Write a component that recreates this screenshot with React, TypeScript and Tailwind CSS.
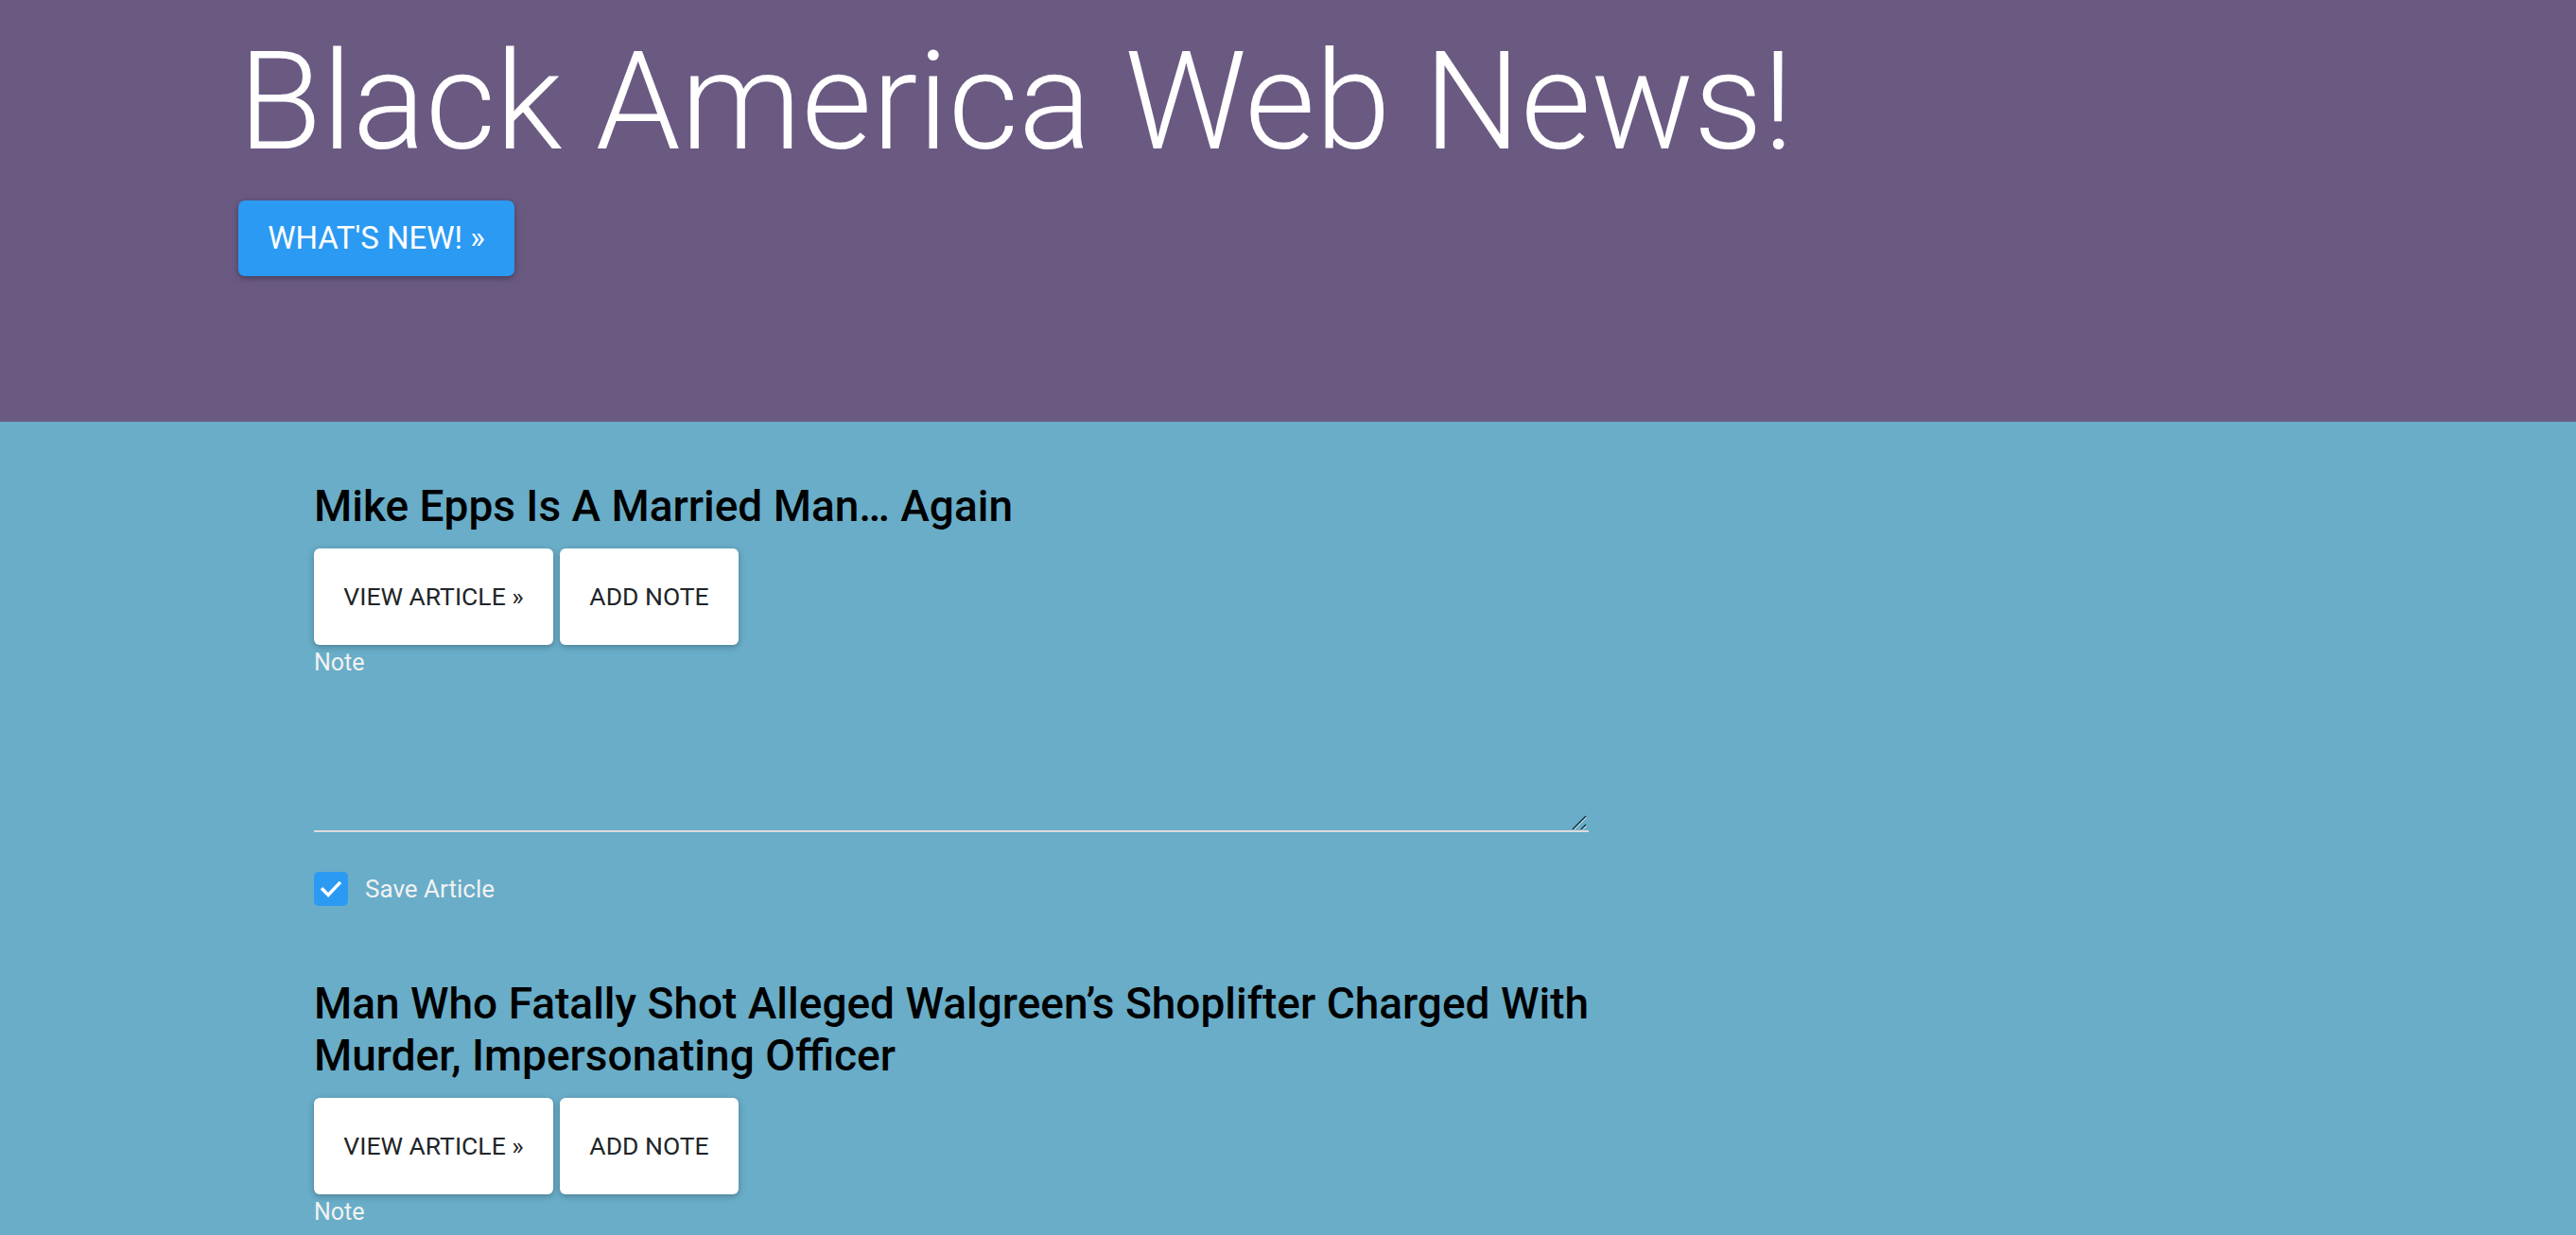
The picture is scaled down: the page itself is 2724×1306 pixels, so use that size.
import { useState } from "react";

const articles = [
  { id: 1, title: "Mike Epps Is A Married Man… Again", saved: true },
  {
    id: 2,
    title:
      "Man Who Fatally Shot Alleged Walgreen’s Shoplifter Charged With Murder, Impersonating Officer",
    saved: true,
  },
];

function Article({ title, saved }: { title: string; saved: boolean }) {
  const [checked, setChecked] = useState(saved);
  const [note, setNote] = useState("");

  return (
    <div className="mb-[76px] w-[1348px]">
      <h3 className="w-[1362px] text-[46px] leading-[55px] font-medium text-black">
        {title}
      </h3>

      <div className="mt-[17px] flex gap-[7px]">
        <button className="h-[102px] w-[253px] rounded-md bg-white text-[26.5px] text-[#212529] uppercase shadow-[0_2px_5px_0_rgba(0,0,0,0.16),0_2px_10px_0_rgba(0,0,0,0.12)]">
          View Article »
        </button>
        <button className="h-[102px] w-[189px] rounded-md bg-white text-[26.5px] text-[#212529] uppercase shadow-[0_2px_5px_0_rgba(0,0,0,0.16),0_2px_10px_0_rgba(0,0,0,0.12)]">
          Add Note
        </button>
      </div>

      <label className="mt-[2px] block text-[25px] leading-[34px] text-[#f2f2f2]">
        Note
      </label>
      <div className="relative">
        <textarea
          value={note}
          onChange={(e) => setNote(e.target.value)}
          className="block h-[162px] w-full resize-none border-0 border-b-2 border-[#dcdcdc] bg-transparent text-[23px] text-white outline-none"
        />
        {/* resize grip */}
        <svg
          viewBox="0 0 16 16"
          className="pointer-events-none absolute right-[2px] bottom-[2px] h-[16px] w-[16px]"
        >
          <path d="M1 15L15 1" stroke="#1d3b4b" strokeWidth="1.6" />
          <path d="M2.5 15.5L15.5 2.5" stroke="#e8f2f6" strokeWidth="1" />
          <path d="M10 15L15 10" stroke="#1d3b4b" strokeWidth="1.6" />
          <path d="M11.5 15.5L15.5 11.5" stroke="#e8f2f6" strokeWidth="1" />
        </svg>
      </div>

      <label className="mt-[42px] flex cursor-pointer items-center gap-[18px]">
        <span
          onClick={() => setChecked(!checked)}
          className={
            checked
              ? "flex h-[36px] w-[36px] items-center justify-center rounded-[5px] bg-[#2b9af3]"
              : "flex h-[36px] w-[36px] items-center justify-center rounded-[5px] border-2 border-white"
          }
        >
          {checked && (
            <svg viewBox="0 0 24 24" className="h-[28px] w-[28px]" fill="none">
              <path
                d="M4.5 12.5l5 5L19.5 7"
                stroke="white"
                strokeWidth="3"
                strokeLinecap="square"
              />
            </svg>
          )}
        </span>
        <span className="text-[26px] leading-[36px] text-[#f2f2f2]">
          Save Article
        </span>
      </label>
    </div>
  );
}

export default function App() {
  return (
    <div
      className="h-screen overflow-y-auto bg-[#69adc8]"
      style={{ fontFamily: "Roboto, 'Noto Sans', sans-serif" }}
    >
      <div className="h-[446px] bg-[#6a5a82] pl-[252px]">
        <h1 className="pt-[22px] text-[144px] leading-[1.2] font-light text-white">
          Black America Web News!
        </h1>
        <button className="mt-[17px] h-[80px] w-[292px] rounded-[7px] bg-[#2b9af3] text-[33px] text-white uppercase shadow-[0_2px_5px_0_rgba(0,0,0,0.2),0_2px_10px_0_rgba(0,0,0,0.15)]">
          What's New! »
        </button>
      </div>

      <div className="pt-[62px] pl-[332px]">
        {articles.map((a) => (
          <Article key={a.id} title={a.title} saved={a.saved} />
        ))}
      </div>
    </div>
  );
}
